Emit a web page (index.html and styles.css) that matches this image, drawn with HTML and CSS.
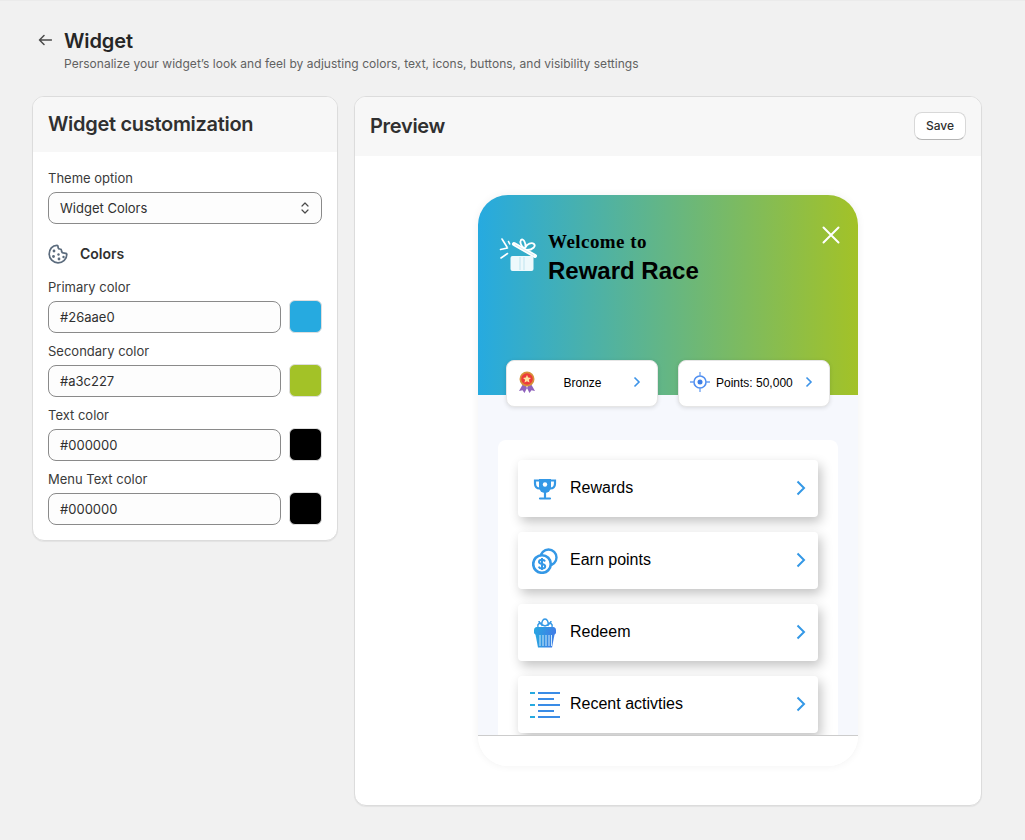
FILE: index.html
```html
<!DOCTYPE html>
<html lang="en">
<head>
<meta charset="utf-8">
<title>Widget</title>
<link rel="stylesheet" href="styles.css">
</head>
<body>
<svg class="defs" width="0" height="0" aria-hidden="true">
  <defs>
    <linearGradient id="ig" x1="0" y1="0" x2="1" y2="0.2">
      <stop offset="0" stop-color="#26aae0"/>
      <stop offset="1" stop-color="#3f7fe6"/>
    </linearGradient>
  </defs>
</svg>
<main class="page">
  <header class="page-head">
    <svg class="back" viewBox="0 0 14 12" width="14" height="12"><path d="M13.500 6H1.500M6 1.500 1.500 6 6 10.500" fill="none" stroke="#4a4a4a" stroke-width="1.500" stroke-linecap="round" stroke-linejoin="round"/></svg>
    <div>
      <h1 class="page-title">Widget</h1>
      <p class="page-sub">Personalize your widget’s look and feel by adjusting colors, text, icons, buttons, and visibility settings</p>
    </div>
  </header>
  <div class="columns">
    <section class="card card-left">
      <div class="card-head card-head-left"><h2 class="card-title">Widget customization</h2></div>
      <div class="card-body">
        <label class="label">Theme option</label>
        <div class="field select">
          <span>Widget Colors</span>
          <svg viewBox="0 0 10 16" width="10" height="16"><path d="M2 6 5 3l3 3M2 10l3 3 3-3" fill="none" stroke="#4a4a4a" stroke-width="1.200" stroke-linecap="round" stroke-linejoin="round"/></svg>
        </div>
        <div class="section-head">
          <svg viewBox="0 0 20 20" width="20" height="20"><path d="M9 1.300C4.300 1.300 1.200 5.300 1.200 10c0 4.800 3.900 8.800 8.800 8.800s8.800-3.700 8.800-8.300c0-1-1.200-1.300-2.300-1.300-2 0-3-1.200-3-2.700 0-1-.7-1.500-1.700-1.500-1.300 0-1.800-1.500-1.800-2.500 0-.5-.4-1.200-1-1.200z" fill="none" stroke="#5b6b7d" stroke-width="1.700" stroke-linejoin="round"/><circle cx="6" cy="7" r="1.400" fill="#5b6b7d"/><circle cx="5.500" cy="12.500" r="1.400" fill="#5b6b7d"/><circle cx="10.500" cy="10.500" r="1.200" fill="#5b6b7d"/><circle cx="11" cy="15" r="1.400" fill="#5b6b7d"/><circle cx="15.500" cy="13" r="1.200" fill="#5b6b7d"/></svg>
          <span class="section-title">Colors</span>
        </div>
        <div class="color-row">
          <label class="label">Primary color</label>
          <div class="color-fields"><div class="field">#26aae0</div><span class="swatch swatch-primary"></span></div>
        </div>
        <div class="color-row">
          <label class="label">Secondary color</label>
          <div class="color-fields"><div class="field">#a3c227</div><span class="swatch swatch-secondary"></span></div>
        </div>
        <div class="color-row">
          <label class="label">Text color</label>
          <div class="color-fields"><div class="field">#000000</div><span class="swatch swatch-black"></span></div>
        </div>
        <div class="color-row">
          <label class="label">Menu Text color</label>
          <div class="color-fields"><div class="field">#000000</div><span class="swatch swatch-black"></span></div>
        </div>
      </div>
    </section>
    <section class="card card-right">
      <div class="card-head card-head-right">
        <h2 class="card-title">Preview</h2>
        <button class="save" type="button">Save</button>
      </div>
      <div class="preview">
        <div class="phone">
          <div class="hero">
            <div class="hero-top">
              <svg class="gift" viewBox="0 0 40 36" width="40" height="36">
                <g fill="none" stroke="#fff" stroke-linecap="round" stroke-linejoin="round">
                  <path d="M3 3 8 11M9.500 5.500l1.200 2.500M1.500 13.500 8.500 12M2 22l6.500-4.500" stroke-width="1.600"/>
                  <path d="M15 8 36 20" stroke-width="4"/>
                  <path d="M25 12c-3-2-4.500-6-3-8 2-2 5 2 4.500 7.500 1.500-3.500 6-5.500 8.500-3.500 2 2-1 6-7 6" stroke-width="1.800"/>
                </g>
                <path d="M16 8.600 35 19.400" stroke="#d5eef3" stroke-width="1"/>
                <rect x="11.500" y="20" width="23" height="15" rx="2" fill="#eef9fc"/>
                <path d="M21 21v13M25 21v13" stroke="#bfe4ef" stroke-width="1"/>
              </svg>
              <div class="hero-text">
                <div class="welcome">Welcome to</div>
                <div class="brand">Reward Race</div>
              </div>
              <svg class="close" viewBox="0 0 18 18" width="18" height="18"><path d="M1.500 1.500 16.500 16.500M16.500 1.500 1.500 16.500" stroke="#fff" stroke-width="2" stroke-linecap="round"/></svg>
            </div>
            <div class="chips">
              <div class="chip">
                <svg class="chip-icon" viewBox="0 0 18 22" width="18" height="22">
                  <path d="M5 13 1 20l3.500-.8L6.500 22 10 15zM13 13l4 7-3.500-.8-2 2.800L8 15z" fill="#8f63bd"/>
                  <circle cx="9" cy="8" r="7.500" fill="#d6923a"/>
                  <circle cx="9" cy="8" r="5.800" fill="#ee3a3a"/>
                  <path d="m9 4 1.200 2.600 2.800.3-2.100 1.900.6 2.800L9 10.200l-2.500 1.400.6-2.800L5 6.900l2.800-.3z" fill="#fde3a0"/>
                </svg>
                <span class="chip-text chip-text-center">Bronze</span>
                <svg class="chev-sm" viewBox="0 0 8 12" width="8" height="12"><path d="M1.500 1.500 6 6l-4.500 4.500" fill="none" stroke="#3d93e8" stroke-width="1.600"/></svg>
              </div>
              <div class="chip">
                <svg class="chip-icon" viewBox="0 0 20 20" width="20" height="20">
                  <circle cx="10" cy="10" r="6" fill="none" stroke="#4f8ef0" stroke-width="1.600"/>
                  <circle cx="10" cy="10" r="2.500" fill="#3f7fe6"/>
                  <path d="M10 0v5M10 15v5M0 10h5M15 10h5" stroke="#6aa0f2" stroke-width="1.300"/>
                </svg>
                <span class="chip-text chip-text-points">Points: 50,000</span>
                <svg class="chev-sm" viewBox="0 0 8 12" width="8" height="12"><path d="M1.500 1.500 6 6l-4.500 4.500" fill="none" stroke="#3d93e8" stroke-width="1.600"/></svg>
              </div>
            </div>
          </div>
          <div class="phone-body">
            <div class="menu">
              <div class="menu-row">
                <span class="menu-icon">
                  <svg viewBox="0 0 24 24" width="24" height="24"><path d="M6 2h12v8a6 6 0 0 1-12 0z" fill="#3498e6"/><path d="M6 3.500H2v3c0 3 2 5 5 5M18 3.500h4v3c0 3-2 5-5 5" fill="none" stroke="#3498e6" stroke-width="2.200"/><circle cx="12" cy="7.500" r="2.200" fill="#fff"/><path d="M12 15v5M7 21.500h10" stroke="#3498e6" stroke-width="2.200" stroke-linecap="round"/></svg>
                </span>
                <span class="menu-label">Rewards</span>
                <svg class="chev" viewBox="0 0 10 16" width="10" height="16"><path d="M1.500 1.500 8 8l-6.500 6.500" fill="none" stroke="#3498e6" stroke-width="2"/></svg>
              </div>
              <div class="menu-row">
                <span class="menu-icon">
                  <svg viewBox="0 0 26 26" width="26" height="26"><circle cx="16.500" cy="9.500" r="8" fill="none" stroke="#3498e6" stroke-width="2.400"/><circle cx="10" cy="16" r="8.800" fill="#fff" stroke="#3498e6" stroke-width="2.600"/><path d="M13 13.500c-.5-1.200-1.500-1.800-3-1.800-1.800 0-3 .9-3 2.200 0 2.800 6.200 1.400 6.200 4.400 0 1.300-1.300 2.200-3.200 2.200-1.600 0-2.800-.6-3.300-1.900M10 10v12" fill="none" stroke="#3498e6" stroke-width="2"/></svg>
                </span>
                <span class="menu-label">Earn points</span>
                <svg class="chev" viewBox="0 0 10 16" width="10" height="16"><path d="M1.500 1.500 8 8l-6.500 6.500" fill="none" stroke="#3498e6" stroke-width="2"/></svg>
              </div>
              <div class="menu-row">
                <span class="menu-icon">
                  <svg viewBox="0 0 24 32" width="24" height="32"><path d="M2 15h20l-3 15.500H5z" fill="url(#ig)"/><path d="M1 13c0-2.500 2-3 4-3h14c2 0 4 .5 4 3v3c-1 2-3 2-4 1-1 1-3 1-4 0-1 1-3 1-3 0-1 1-3 1-3 0-1 1-3 1-4 0-1 1-3 1-4-1z" fill="url(#ig)"/><path d="M7 18v11M10 18v11M13 18v11M16 18v11M18.500 18v11" stroke="#cfe9f8" stroke-width="1"/><path d="M5 10c-1-3 2-5 4-3M19 10c1-3-2-5-4-3M9 9c-1-4 1-7 3-7s4 3 3 7M12 9c-3-1-6-2-6-5M12 9c3-1 6-2 6-5" fill="none" stroke="#3498e6" stroke-width="1.500"/></svg>
                </span>
                <span class="menu-label">Redeem</span>
                <svg class="chev" viewBox="0 0 10 16" width="10" height="16"><path d="M1.500 1.500 8 8l-6.500 6.500" fill="none" stroke="#3498e6" stroke-width="2"/></svg>
              </div>
              <div class="menu-row">
                <span class="menu-icon">
                  <svg viewBox="0 0 30 26" width="30" height="26"><path d="M0 1h5M0 13h5M0 25h5" stroke="#26aae0" stroke-width="1.800"/><path d="M8 1h22M8 7h16M8 13h22M8 19h16M8 25h22" stroke="#3a8ce6" stroke-width="1.800"/></svg>
                </span>
                <span class="menu-label">Recent activties</span>
                <svg class="chev" viewBox="0 0 10 16" width="10" height="16"><path d="M1.500 1.500 8 8l-6.500 6.500" fill="none" stroke="#3498e6" stroke-width="2"/></svg>
              </div>
            </div>
          </div>
          <div class="phone-foot"></div>
        </div>
      </div>
    </section>
  </div>
</main>
</body>
</html>
```
FILE: styles.css
```css
* { box-sizing: border-box; }
html, body { margin: 0; padding: 0; }
body {
  width: 1025px;
  height: 840px;
  overflow: hidden;
  background: #f1f1f1;
  border-top: 1px solid #ebebeb;
  font-family: Inter, "Liberation Sans", sans-serif;
  color: #303030;
}
.defs { display: block; height: 0; }
.page { padding: 28px 43px 0 32px; }
.page-head { display: flex; align-items: flex-start; height: 67px; }
.back { margin: 5px 12px 0 6px; flex: none; }
.page-title { margin: 0; font-size: 20px; line-height: 24px; font-weight: 600; letter-spacing: -.1px; color: #262626; }
.page-sub { margin: 3px 0 0; font-size: 12px; line-height: 16px; letter-spacing: .03px; color: #616161; }
.columns { display: flex; gap: 16px; align-items: flex-start; }
.card {
  background: #fff;
  border: 1px solid #dcdcdc;
  border-radius: 12px;
  overflow: hidden;
  box-shadow: 0 1px 1px rgba(0,0,0,.06);
}
.card-left { width: 306px; height: 445px; flex: none; }
.card-right { width: 628px; height: 710px; flex: none; }
.card-head { background: #f7f7f7; display: flex; align-items: center; padding: 0 15px 1px; }
.card-head-left { height: 55px; }
.card-head-right { height: 59px; justify-content: space-between; }
.card-title { margin: 0; font-size: 20px; line-height: 24px; font-weight: 600; letter-spacing: -.3px; color: #303030; }
.card-body { padding: 18px 15px 0; }
.label { display: block; font-size: 13px; line-height: 16px; color: #3a3a3a; }
.field {
  height: 32px;
  border: 1px solid #8a8a8a;
  border-radius: 8px;
  background: #fdfdfd;
  padding: 0 11px;
  display: flex;
  align-items: center;
  font-size: 13px;
  color: #303030;
  flex: 1;
}
.select { margin-top: 6px; justify-content: space-between; }
.section-head { display: flex; align-items: center; gap: 12px; margin-top: 20px; height: 20px; font-size: 14px; font-weight: 600; }
.section-title { padding-bottom: 2px; }
.color-row { margin-top: 9px; height: 55px; }
.section-head + .color-row { margin-top: 15px; }
.color-fields { display: flex; gap: 8px; margin-top: 6px; }
.swatch { width: 33px; height: 33px; margin-top: -1px; border-radius: 6px; border: 1px solid #dedede; flex: none; }
.swatch-primary { background: #26aae0; }
.swatch-secondary { background: #a3c227; }
.swatch-black { background: #000; }
.save {
  width: 52px;
  height: 28px;
  padding: 0 0 2px;
  background: #fff;
  border: 1px solid #d8d8d8;
  border-bottom-color: #b5b5b5;
  border-radius: 8px;
  font: 500 12px Inter, sans-serif;
  color: #303030;
}
.preview { padding-top: 39px; display: flex; justify-content: center; }
.phone {
  width: 380px;
  height: 571px;
  border-radius: 30px;
  overflow: hidden;
  background: #fff;
  box-shadow: 0 0 8px rgba(0,0,0,.06);
  font-family: "Liberation Sans", sans-serif;
  color: #000;
}
.hero { height: 200px; background: linear-gradient(90deg, #26aae0, #a3c227); padding: 0 28px; position: relative; z-index: 1; }
.hero-top { display: flex; align-items: flex-start; height: 165px; padding-top: 35px; margin: 0 -8px 0 -7px; }
.gift { flex: none; margin: 6px 9px 0 0; }
.hero-text { flex: 1; }
.welcome { font: 700 19px/24px "Liberation Serif", serif; letter-spacing: .45px; }
.brand { font: 700 24px/28px "Liberation Sans", sans-serif; margin-top: 3px; }
.close { flex: none; margin: -4px -2px 0 0; }
.chips { display: flex; gap: 20px; height: 47px; }
.chip {
  flex: 1;
  background: #fff;
  border-radius: 8px;
  border: 1px solid #e6e6e6;
  box-shadow: 0 1px 4px rgba(0,0,0,.12);
  display: flex;
  align-items: center;
  padding: 0 16px 4px 11px;
  font-size: 12px;
}
.chip-icon { flex: none; }
.chip-text { flex: 1; padding-top: 2px; }
.chip-text-center { text-align: center; padding-right: 4px; }
.chip-text-points { padding-left: 6px; }
.chev-sm { flex: none; }
.phone-body { height: 341px; background: #f6f8fd; padding: 45px 20px 0; overflow: hidden; border-bottom: 1px solid #ccc; }
.menu { background: #fff; border-radius: 8px; padding: 20px; display: flex; flex-direction: column; gap: 15px; }
.menu-row {
  height: 57px;
  background: #fff;
  border-radius: 4px;
  box-shadow: 3px 5px 12px rgba(0,0,0,.24);
  display: flex;
  align-items: center;
  padding: 0 12px;
}
.menu-icon { width: 30px; display: flex; justify-content: center; flex: none; }
.menu-label { flex: 1; font-size: 16px; margin-left: 10px; padding-bottom: 2px; }
.chev { flex: none; margin-bottom: 2px; }
.phone-foot { height: 30px; background: #fff; }
```
